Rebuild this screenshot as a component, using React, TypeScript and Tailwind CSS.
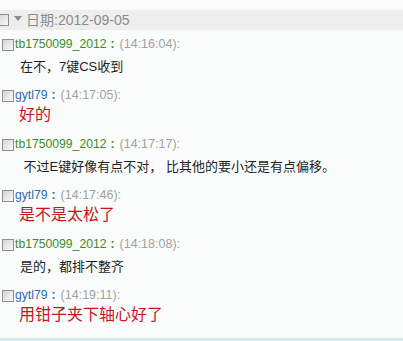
import React from "react";

type Msg = {
  name: string;
  time: string;
  text: string;
  mine: boolean;
};

const MESSAGES: Msg[] = [
  { name: "tb1750099_2012", time: "(14:16:04):", text: "在不，7键CS收到", mine: false },
  { name: "gytl79", time: "(14:17:05):", text: "好的", mine: true },
  { name: "tb1750099_2012", time: "(14:17:17):", text: " 不过E键好像有点不对， 比其他的要小还是有点偏移。", mine: false },
  { name: "gytl79", time: "(14:17:46):", text: "是不是太松了", mine: true },
  { name: "tb1750099_2012", time: "(14:18:08):", text: "是的，都排不整齐", mine: false },
  { name: "gytl79", time: "(14:19:11):", text: "用钳子夹下轴心好了", mine: true },
];

function Check({ className = "" }: { className?: string }) {
  return (
    <span
      className={
        "block w-[12px] h-[12px] shrink-0 border border-[#8e8f8f] bg-gradient-to-br from-[#d4d4d4] to-[#fbfbfb] " +
        className
      }
    />
  );
}

export default function App() {
  return (
    <div
      className="h-[341px] overflow-hidden bg-[#fafcfb] flex flex-col pt-[10px]"
      style={{ fontFamily: '"Liberation Sans", "Noto Sans CJK SC", sans-serif' }}
    >
      {/* date header */}
      <div className="h-[20px] bg-[#eeeeee] flex items-center">
        <Check className="-ml-[3px]" />
        <svg width="8" height="5" viewBox="0 0 8 5" className="ml-[5px] -mt-[4px]">
          <path d="M0 0 H8 L4 5 Z" fill="#8a8a8a" />
        </svg>
        <span className="ml-[4px] text-[14px] text-[#8c8c8c] leading-none">
          日期:2012-09-05
        </span>
      </div>

      <div className="pt-[6px]">
        {MESSAGES.map((m, i) => (
          <div key={i} className="mb-[10px]">
            <div className="h-[17px] flex items-center pl-[2px]">
              <Check />
              <span
                className={
                  "ml-[1px] text-[12.2px] leading-none " +
                  (m.mine ? "text-[#2b6db4]" : "text-[#3c8a2e]")
                }
              >
                {m.name}
                <span className="ml-[4px] mr-[5px] font-bold">:</span>
              </span>
              <span className="text-[12.5px] leading-none text-[#a0a0a0]">{m.time}</span>
            </div>
            {m.mine ? (
              <div className="pl-[19px] text-[16px] leading-[22px] text-[#c4161c]">{m.text}</div>
            ) : (
              <div className="pl-[20px] mt-[4px] text-[13px] leading-[20px] text-[#1e1e1e] whitespace-pre">
                {m.text}
              </div>
            )}
          </div>
        ))}
      </div>

      <div className="mt-auto h-[3px] bg-[#d6e7ee]" />
    </div>
  );
}
